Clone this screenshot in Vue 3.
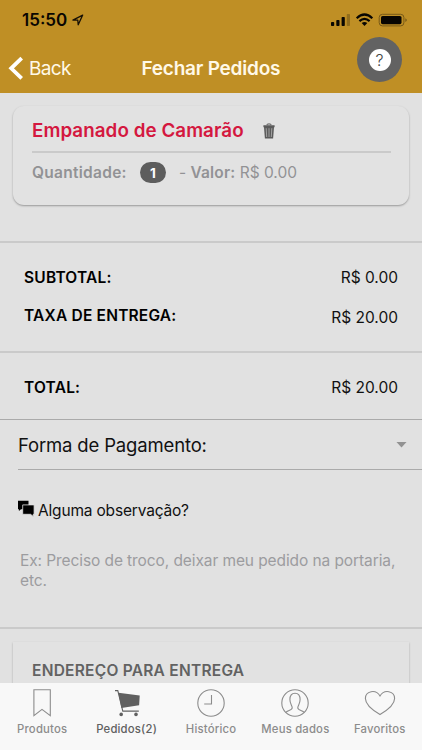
<script setup>
const tabs = [
  { id: 'produtos', label: 'Produtos' },
  { id: 'pedidos', label: 'Pedidos(2)', active: true },
  { id: 'historico', label: 'Histórico' },
  { id: 'dados', label: 'Meus dados' },
  { id: 'favoritos', label: 'Favoritos' }
]
</script>

<template>
  <div class="screen">
    <header>
      <div class="status">
        <span class="time">15:50</span>
        <svg class="arrow" width="12" height="12" viewBox="0 0 12 12"><path d="M.9 6.1 10.7 1.1 6.2 10.8 5.8 6.2Z" fill="none" stroke="#171005" stroke-width="1.3" stroke-linejoin="round" /></svg>
        <svg class="system" width="77" height="14" viewBox="0 0 77 14">
          <g fill="#080602">
            <rect x="0" y="9" width="3.2" height="4" rx=".8" /><rect x="5.3" y="7" width="3.2" height="6" rx=".8" /><rect x="10.6" y="4" width="3.2" height="9" rx=".8" />
            <rect x="15.8" y="1" width="3.2" height="12" rx=".8" opacity=".25" />
          </g>
          <g fill="none" stroke="#080602" stroke-width="2.2"><path d="M25.7 5.2Q33.5 -2.2 41.3 5.2" /><path d="M28.4 8.1Q33.5 3.6 38.6 8.1" /></g>
          <path d="M30.7 10.1Q33.5 7.9 36.3 10.1L33.5 13Z" fill="#080602" />
          <rect x="48.2" y="1.3" width="24.7" height="11.6" rx="3.2" fill="none" stroke="#775918" />
          <rect x="50" y="3" width="20.5" height="8.2" rx="1.6" fill="#080602" />
          <path d="M74.3 5.2q3.2 1.9 0 3.8z" fill="#775918" />
        </svg>
      </div>
      <div class="nav">
        <svg width="16" height="26" viewBox="0 0 16 26"><path d="M14.7 2.2 4.2 12.3 14.7 22.4" fill="none" stroke="#fff" stroke-width="3.8" /></svg>
        <span class="back">Back</span>
        <span class="title">Fechar Pedidos</span>
      </div>
      <div class="help"><span>?</span></div>
    </header>

    <main>
      <section class="item-area">
        <div class="card">
          <div class="product">
            <span class="name">Empanado de Camarão</span>
            <svg width="12" height="16" viewBox="0 0 12 16"><path d="M3.7 2Q6-.4 8.3 2" fill="none" stroke="#777" stroke-width="1.2" /><path d="M.4 2.2h11.2v2H.4zM1 4.2h10l-.9 11.4H1.9z" fill="#5b5b5b" /><path d="M3.2 5.2 3.7 14M6 5.2V14M8.8 5.2 8.3 14" fill="none" stroke="#aaa" stroke-width=".9" /></svg>
          </div>
          <div class="quantity">
            <b class="qlabel">Quantidade:</b><span class="badge">1</span><span class="value">- <b>Valor:</b> R$ 0.00</span>
          </div>
        </div>
      </section>
      <section class="totals">
        <div class="row"><b>SUBTOTAL:</b><span>R$ 0.00</span></div>
        <div class="row fee"><b>TAXA DE ENTREGA:</b><span>R$ 20.00</span></div>
      </section>
      <section class="total row"><b>TOTAL:</b><span>R$ 20.00</span></section>
      <section class="payment"><div class="select"><span>Forma de Pagamento:</span><i></i></div></section>
      <section class="notes">
        <div class="question">
          <svg width="17" height="17" viewBox="0 0 17 17"><path d="M0 .8h10.5v8.4H3L.9 11V9.2H0z" fill="#000" /><path d="M4.7 4.9h11.4v9.4h-.9v2.1l-2.6-2.1H4.7z" fill="#000" stroke="#e1e1e1" stroke-width=".8" /></svg>
          <span>Alguma observação?</span>
        </div>
        <p>Ex: Preciso de troco, deixar meu pedido na portaria,<br><span>etc.</span></p>
      </section>
      <section class="address"><div><b>ENDEREÇO PARA ENTREGA</b></div></section>
    </main>

    <footer>
      <div v-for="tab in tabs" :key="tab.id" class="tab" :class="[tab.id, { active: tab.active }]">
        <svg width="32" height="30" viewBox="0 0 32 30" fill="none" stroke="currentColor" stroke-width="1.1">
          <path v-if="tab.id === 'produtos'" d="M7.9 1.7h16.4v26L16 21.4l-8.1 6.3z" />
          <template v-else-if="tab.id === 'pedidos'">
            <path d="M4 2.6h2.8l5 20.5h16" /><path d="M7.4 4.7 28.7 7.6l-.6 9.7-17.7 2.8z" fill="currentColor" stroke="none" /><circle cx="10.2" cy="26.4" r="1.8" fill="currentColor" stroke="none" /><circle cx="25" cy="26.4" r="1.8" fill="currentColor" stroke="none" />
          </template>
          <template v-else-if="tab.id === 'historico'"><circle cx="16" cy="15" r="13.2" /><path d="M16.5 7v9H9.2" /></template>
          <template v-else-if="tab.id === 'dados'"><circle cx="16" cy="15" r="13.2" /><path d="M6.8 24.5C8.2 22.1 13.2 22.5 13.2 19.7c0-2-2.3-3.6-2.3-8.1 0-4.2 1.9-6.3 5.1-6.3s5.1 2.1 5.1 6.3c0 4.5-2.3 6.1-2.3 8.1 0 2.8 5 2.4 6.4 4.8" /></template>
          <path v-else d="M16 26.5C11.2 23.7 1.4 18 1.4 10.5 1.4 3 11.8.8 16 8 20.2.8 30.6 3 30.6 10.5 30.6 18 20.8 23.7 16 26.5Z" />
        </svg>
        <span>{{ tab.label }}</span>
      </div>
    </footer>
  </div>
</template>

<style>
body { margin: 0; overflow: hidden; }
</style>

<style scoped>
* { box-sizing: border-box; }
.screen { width: 422px; height: 750px; display: flex; flex-direction: column; overflow: hidden; background: #e1e1e1; color: #111; font-family: Inter, "Liberation Sans", sans-serif; font-size: 15.5px; white-space: nowrap; }
svg { display: block; flex: none; }
header { height: 93px; flex: none; background: #bf8f25; position: relative; }
.status { height: 40px; display: flex; align-items: center; padding: 0 14px 0 22px; }
.time { font-size: 17px; font-weight: 600; letter-spacing: 0; width: 50px; color: #090602; }
.system { margin-left: auto; }
.nav { height: 53px; display: flex; align-items: center; padding: 4px 0 0 7px; color: #fff9e8; }
.back { font-size: 19px; margin-left: 6px; width: 112.5px; letter-spacing: -.65px; }
.title { font-size: 19px; font-weight: 600; letter-spacing: -.22px; }
.help { position: absolute; left: 357px; top: 37px; width: 45px; height: 45px; border-radius: 50%; background: #626262; display: grid; place-items: center; }
.help span { width: 22px; height: 22px; border-radius: 50%; background: #fff; color: #444; display: grid; place-items: center; font-size: 16px; font-weight: 300; }
main { height: 590px; flex: none; overflow: hidden; }
.item-area { height: 149.5px; padding: 13px 13px 0; border-bottom: 2px solid #cacaca; }
.card { height: 99px; border-radius: 11px; background: #e2e2e2; box-shadow: 0 1px 2px #999; padding: 0 18px 0 19px; }
.product { height: 47px; display: flex; align-items: center; gap: 19px; border-bottom: 2px solid #cacaca; padding-top: 4px; }
.name { color: #d4183f; font-size: 18.8px; font-weight: 600; letter-spacing: .06px; }
.quantity { height: 39px; display: flex; align-items: center; color: #929295; }
.qlabel { width: 108px; font-weight: 600; letter-spacing: .28px; }
.badge { width: 26px; height: 21px; border-radius: 11px; background: #5d5d5d; color: #fff; display: grid; place-items: center; font-size: 13.5px; font-weight: 700; }
.value { margin-left: 13px; }
.value b { font-weight: 600; letter-spacing: .15px; }
.row { display: flex; justify-content: space-between; align-items: center; padding: 0 24px; }
.row b { font-size: 15.5px; font-weight: 600; letter-spacing: .2px; color: #000; }
.totals { height: 110.5px; border-bottom: 2px solid #cacaca; padding-top: 18px; }
.totals .row { height: 34px; }
.fee { margin-top: 6px; }
.fee b { margin-top: -4px; }
.total { height: 67px; border-bottom: 1px solid #aaa; padding-top: 2px; }
.payment { height: 50px; padding-left: 18px; }
.select { height: 50px; border-bottom: 1px solid #aaa; display: flex; align-items: center; justify-content: space-between; padding-right: 15px; font-size: 18.5px; letter-spacing: -.16px; }
.select i { width: 11px; height: 6px; background: #929292; clip-path: polygon(0 0, 100% 0, 50% 100%); }
.notes { height: 159px; border-bottom: 2px solid #cacaca; padding: 27px 18px 0; }
.question { height: 26px; display: flex; align-items: center; gap: 3px; letter-spacing: -.18px; }
.question svg { margin-top: -3px; }
.notes p { margin: 28px 0 0 2px; color: #9c9c9f; line-height: 20px; letter-spacing: -.09px; }
.address { padding: 12.5px 13px 0; }
.address div { height: 60px; padding: 18px 19px 0; background: #e2e2e2; box-shadow: 0 1px 2px #aaa; color: #626262; }
.address b { display: block; line-height: 22px; font-weight: 600; letter-spacing: .25px; }
footer { height: 67px; flex: none; display: grid; grid-template-columns: repeat(5, 84.4px); background: #f8f8f8; color: #8c8c8c; font-size: 11.3px; font-weight: 500; letter-spacing: .2px; }
.tab { display: flex; flex-direction: column; align-items: center; padding-top: 5px; }
.tab > span { line-height: 16px; margin-top: 3px; }
.tab.active { color: #606060; }
</style>
